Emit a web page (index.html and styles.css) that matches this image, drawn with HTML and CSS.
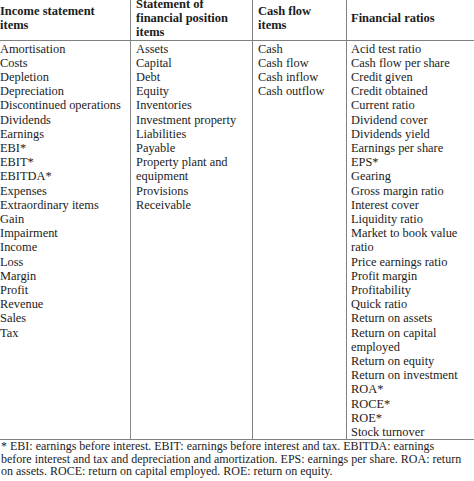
FILE: index.html
```
<!DOCTYPE html>
<html>
<head>
<meta charset="utf-8">
<link rel="stylesheet" href="styles.css">
</head>
<body>
<div class="page">
<table class="terms">
  <thead>
    <tr>
      <th class="c1">Income statement<br>items</th>
      <th class="c2">Statement of<br>financial position<br>items</th>
      <th class="c3">Cash flow<br>items</th>
      <th class="c4">Financial ratios</th>
    </tr>
  </thead>
  <tbody>
    <tr>
      <td class="c1">Amortisation<br>Costs<br>Depletion<br>Depreciation<br>Discontinued operations<br>Dividends<br>Earnings<br>EBI*<br>EBIT*<br>EBITDA*<br>Expenses<br>Extraordinary items<br>Gain<br>Impairment<br>Income<br>Loss<br>Margin<br>Profit<br>Revenue<br>Sales<br>Tax</td>
      <td class="c2">Assets<br>Capital<br>Debt<br>Equity<br>Inventories<br>Investment property<br>Liabilities<br>Payable<br>Property plant and<br>equipment<br>Provisions<br>Receivable</td>
      <td class="c3">Cash<br>Cash flow<br>Cash inflow<br>Cash outflow</td>
      <td class="c4">Acid test ratio<br>Cash flow per share<br>Credit given<br>Credit obtained<br>Current ratio<br>Dividend cover<br>Dividends yield<br>Earnings per share<br>EPS*<br>Gearing<br>Gross margin ratio<br>Interest cover<br>Liquidity ratio<br>Market to book value<br>ratio<br>Price earnings ratio<br>Profit margin<br>Profitability<br>Quick ratio<br>Return on assets<br>Return on capital<br>employed<br>Return on equity<br>Return on investment<br>ROA*<br>ROCE*<br>ROE*<br>Stock turnover</td>
    </tr>
  </tbody>
</table>
<div class="note">
  <div class="line">* EBI: earnings before interest. EBIT: earnings before interest and tax. EBITDA: earnings</div>
  <div class="line">before interest and tax and depreciation and amortization. EPS: earnings per share. ROA: return</div>
  <div class="line">on assets. ROCE: return on capital employed. ROE: return on equity.</div>
</div>
</div>
</body>
</html>
```
FILE: styles.css
```
html, body {
  margin: 0;
  padding: 0;
  background: #fff;
  overflow: hidden;
}
body {
  font-family: "Liberation Serif", "Times New Roman", serif;
  font-size: 12.4px;
  color: #1c1c1c;
}
.page {
  width: 474px;
  height: 481px;
  overflow: hidden;
}
.terms {
  border-collapse: collapse;
  margin-top: -3px;
  table-layout: fixed;
  width: 500px;
}
.terms th, .terms td {
  padding: 0 0 0 5px;
  line-height: 14.2px;
  text-align: left;
  vertical-align: top;
  white-space: nowrap;
}
.terms th {
  font-size: 12.5px;
  font-weight: bold;
  vertical-align: middle;
  height: 42px;
  border-bottom: 1px solid #808080;
}
.terms td {
  padding-top: 1px;
  padding-bottom: 0;
  border-bottom: 1px solid #808080;
}
.terms .c1 { width: 130px; padding-left: 0; border-right: 1.5px solid #8a8a8a; }
.terms .c2 { width: 116px; padding-left: 5px; border-right: 1px solid #808080; }
.terms .c3 { width: 88px; padding-left: 5px; border-right: 1px solid #808080; }
.terms .c4 { padding-left: 4px; }
.note {
  padding-top: 0;
  font-size: 12px;
  line-height: 12.6px;
  white-space: nowrap;
}
.note .line {
  padding-left: 1px;
}
```
